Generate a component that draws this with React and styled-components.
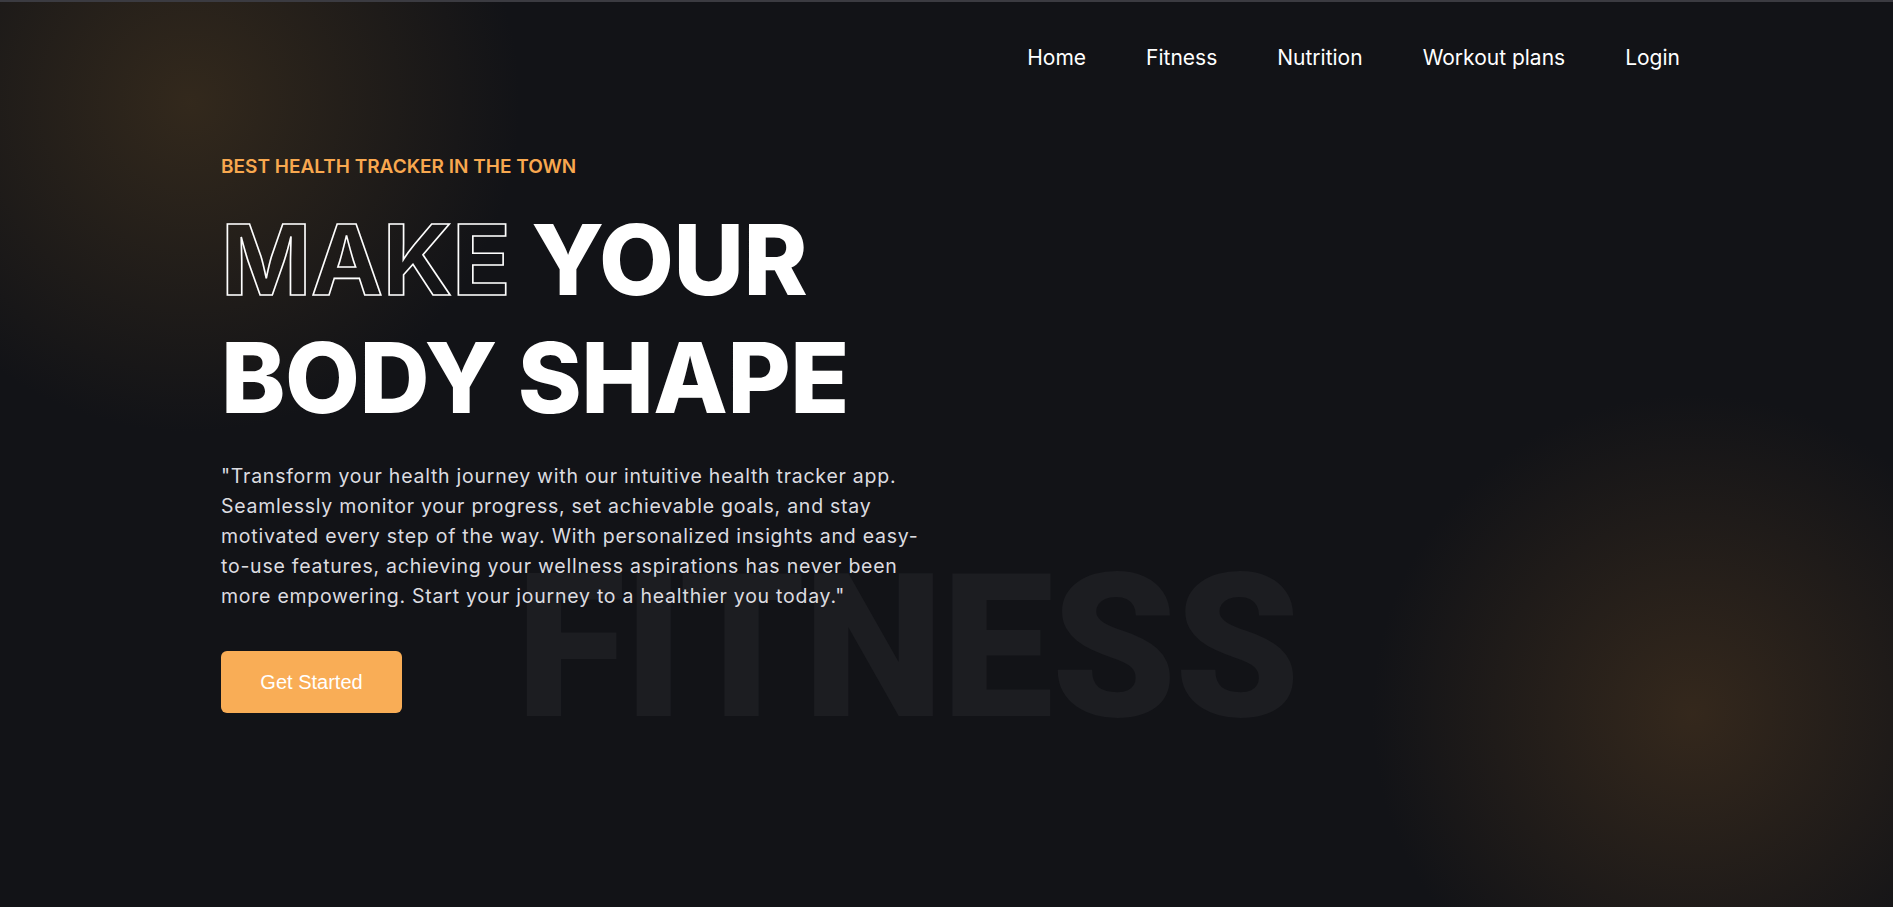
import React from "react";
import styled, { createGlobalStyle } from "styled-components";

const GlobalStyle = createGlobalStyle`
  * {
    box-sizing: border-box;
  }
  body {
    margin: 0;
    background: #121317;
    font-family: "Inter", "Liberation Sans", sans-serif;
  }
`;

const navLinks = ["Home", "Fitness", "Nutrition", "Workout plans", "Login"];

const leadLines = [
  "\"Transform your health journey with our intuitive health tracker app.",
  "Seamlessly monitor your progress, set achievable goals, and stay",
  "motivated every step of the way. With personalized insights and easy-",
  "to-use features, achieving your wellness aspirations has never been",
  "more empowering. Start your journey to a healthier you today.\"",
];

export default function App() {
  return (
    <>
      <GlobalStyle />
      <Page>
        <Header>
          <NavList>
            {navLinks.map((link) => (
              <NavItem key={link}>
                <NavLink href="#">{link}</NavLink>
              </NavItem>
            ))}
          </NavList>
        </Header>

        <Hero>
          <BackWord aria-hidden="true">FITNESS</BackWord>
          <Eyebrow>BEST HEALTH TRACKER IN THE TOWN</Eyebrow>
          <Title>
            <Outline>MAKE</Outline> YOUR
            <br />
            BODY SHAPE
          </Title>
          <Lead>
            {leadLines.map((line, i) => (
              <React.Fragment key={i}>
                {line}
                {i < leadLines.length - 1 && <br />}
              </React.Fragment>
            ))}
          </Lead>
          <StartButton>Get Started</StartButton>
        </Hero>
      </Page>
    </>
  );
}

const Page = styled.div`
  position: relative;
  min-height: 907px;
  overflow: hidden;
  border-top: 2px solid #3b3b41;
  background:
    radial-gradient(circle at 190px 100px, rgba(62, 48, 30, 0.75) 0, rgba(18, 19, 23, 0) 330px),
    radial-gradient(circle at 1692px 712px, rgba(64, 47, 30, 0.75) 0, rgba(18, 19, 23, 0) 320px),
    #121317;
`;

const Header = styled.header`
  display: flex;
  justify-content: flex-end;
  padding: 41px 213px 0 0;
`;

const NavList = styled.ul`
  display: flex;
  gap: 60px;
  list-style: none;
  margin: 0;
  padding: 0;
`;

const NavItem = styled.li`
  line-height: 30px;
`;

const NavLink = styled.a`
  color: #ffffff;
  text-decoration: none;
  font-size: 21px;
  font-weight: 400;
`;

const Hero = styled.section`
  position: relative;
  display: flex;
  flex-direction: column;
  align-items: flex-start;
  padding: 81px 0 0 221px;
`;

const BackWord = styled.div`
  position: absolute;
  left: 516px;
  top: 474px;
  font-family: "Roboto", sans-serif;
  font-weight: 900;
  font-size: 200px;
  line-height: 1;
  letter-spacing: -2px;
  color: #1c1d21;
  user-select: none;
`;

const Eyebrow = styled.p`
  position: relative;
  margin: 0;
  color: #f8a84f;
  font-size: 19px;
  font-weight: 600;
  line-height: 24px;
`;

const Title = styled.h1`
  position: relative;
  margin: 22px 0 0;
  color: #ffffff;
  font-size: 97px;
  font-weight: 800;
  line-height: 118px;
  letter-spacing: -0.5px;
`;

const Outline = styled.span`
  color: transparent;
  -webkit-text-stroke: 1.6px #ffffff;
  font-weight: 700;
`;

const Lead = styled.p`
  position: relative;
  margin: 24px 0 0;
  color: #dcdce0;
  font-size: 19.5px;
  font-weight: 400;
  line-height: 30px;
  letter-spacing: 0.75px;
  white-space: nowrap;
`;

const StartButton = styled.button`
  position: relative;
  width: 181px;
  height: 62px;
  margin-top: 40px;
  border: none;
  border-radius: 6px;
  background: #f9ad56;
  color: #ffffff;
  font-family: "Liberation Sans", Arial, sans-serif;
  font-size: 20px;
  cursor: pointer;
`;
